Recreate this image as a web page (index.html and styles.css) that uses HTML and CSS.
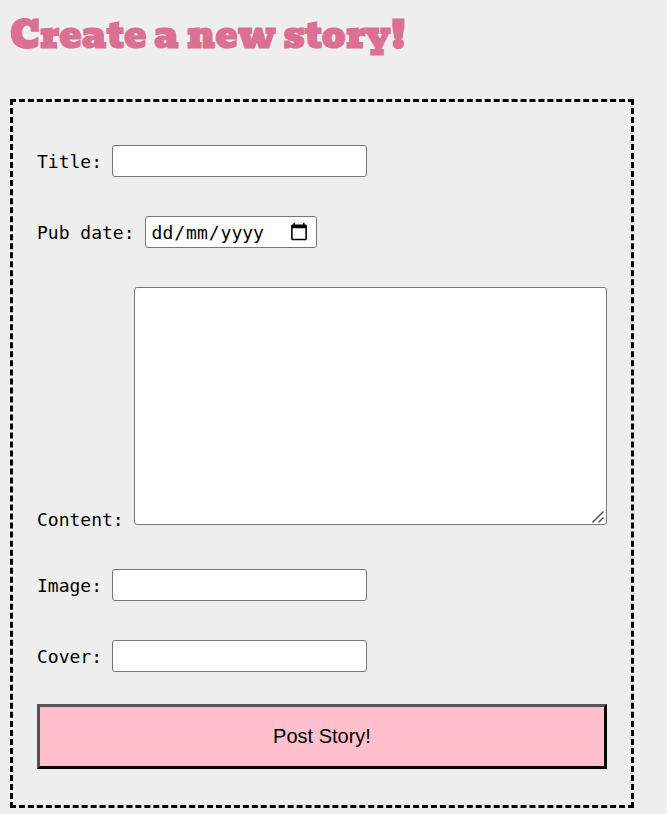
FILE: index.html
```html
<!DOCTYPE html>
<html lang="en-GB">
<head>
<meta charset="utf-8">
<title>Create a new story!</title>
<link rel="stylesheet" href="styles.css">
</head>
<body>
<h1>Create a new story!</h1>
<form class="story-form">
  <div class="field"><label for="title">Title:</label> <input type="text" id="title"></div>
  <div class="field"><label for="pub-date">Pub date:</label> <input type="date" id="pub-date"></div>
  <div class="field field-content"><label for="content">Content:</label> <textarea id="content"></textarea></div>
  <div class="field"><label for="image">Image:</label> <input type="text" id="image"></div>
  <div class="field field-last"><label for="cover">Cover:</label> <input type="text" id="cover"></div>
  <button type="submit" class="submit">Post Story!</button>
</form>
</body>
</html>
```

FILE: styles.css
```css
* { box-sizing: border-box; }
body {
  margin: 0 33px 0 10px;
  background: #eee;
  color: #000;
  font-family: "DejaVu Sans Mono", monospace;
  font-size: 18px;
}
h1 {
  margin: 10px 0 39px;
  color: palevioletred;
  font: 700 37px/50px "Bevan", "Alfa Slab One", "DejaVu Serif", serif;
}
.story-form {
  border: 3px dashed #000;
  padding: 43px 24px 36px;
}
.field {
  display: flex;
  align-items: center;
  gap: 10px;
  margin: 0 0 39px;
}
.field-content { align-items: flex-end; }
.field-last { margin-bottom: 32px; }
input, textarea {
  height: 32px;
  margin: 0;
  border: 1px solid #767676;
  border-radius: 3px;
  background: #fff;
}
input { width: 255px; }
input[type="date"] {
  width: 172px;
  padding: 1px 5px;
  font: 18px "DejaVu Sans Mono", monospace;
}
input::-webkit-datetime-edit-month-field { transform: translateX(calc(3ch + 2px)); }
input::-webkit-datetime-edit-day-field { transform: translateX(calc(-3ch - 2px)); }
input::-webkit-datetime-edit-month-field,
input::-webkit-datetime-edit-day-field { display: inline-block; }
input::-webkit-calendar-picker-indicator { font-size: 20px; }
textarea { flex: 1; min-width: 0; height: 238px; margin-bottom: 5px; }
textarea::-webkit-resizer {
  background: url("data:image/svg+xml,%3Csvg xmlns='http://www.w3.org/2000/svg' width='15' height='15'%3E%3Cpath d='M1.5 13.5l11-11M7.5 13.5l5-5' stroke='%23555' stroke-width='1.5'/%3E%3C/svg%3E") no-repeat right bottom;
}
.submit {
  display: block;
  width: 100%;
  height: 65px;
  border: 3px outset #000;
  background: pink;
  color: #000;
  font: 20px "Liberation Sans", sans-serif;
}
```
